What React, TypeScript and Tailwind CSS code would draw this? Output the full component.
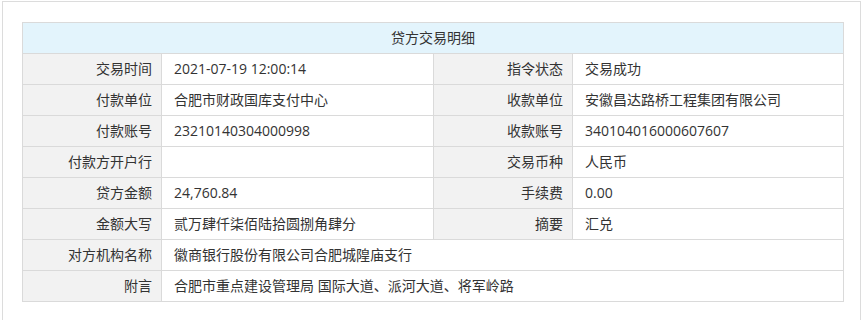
const rows: [string, string, string?, string?][] = [
  ['交易时间', '2021-07-19 12:00:14', '指令状态', '交易成功'],
  ['付款单位', '合肥市财政国库支付中心', '收款单位', '安徽昌达路桥工程集团有限公司'],
  ['付款账号', '23210140304000998', '收款账号', '340104016000607607'],
  ['付款方开户行', '', '交易币种', '人民币'],
  ['贷方金额', '24,760.84', '手续费', '0.00'],
  ['金额大写', '贰万肆仟柒佰陆拾圆捌角肆分', '摘要', '汇兑'],
  ['对方机构名称', '徽商银行股份有限公司合肥城隍庙支行'],
  ['附言', '合肥市重点建设管理局 国际大道、派河大道、将军岭路'],
];

const label = 'h-[31px] bg-[#f2f2f2] border border-[#dadada] text-right pr-[9px] font-normal';
const value = 'h-[31px] bg-white border border-[#dadada] text-left pl-[12px]';

export default function App() {
  return (
    <div className="w-[865px] h-[320px] bg-white overflow-hidden">
      <div
        className="ml-[2px] mt-[1px] w-[859px] h-[340px] border border-[#dcdcdc] pt-[20px] pl-[19px] text-sm text-[#333]"
        style={{ fontFamily: '"Open Sans", "Noto Sans CJK SC", sans-serif' }}
      >
        <table className="w-[821px] border-collapse table-fixed">
          <colgroup>
            <col className="w-[139px]" />
            <col className="w-[272px]" />
            <col className="w-[139px]" />
            <col className="w-[271px]" />
          </colgroup>
          <thead>
            <tr>
              <th colSpan={4} className="h-[31px] bg-[#e3f4fc] border border-[#dadada] font-normal text-center">
                贷方交易明细
              </th>
            </tr>
          </thead>
          <tbody>
            {rows.map((r, i) => (
              <tr key={i}>
                <td className={label}>{r[0]}</td>
                {r[2] !== undefined ? (
                  <>
                    <td className={value}>{r[1]}</td>
                    <td className={label}>{r[2]}</td>
                    <td className={value}>{r[3]}</td>
                  </>
                ) : (
                  <td colSpan={3} className={value}>{r[1]}</td>
                )}
              </tr>
            ))}
          </tbody>
        </table>
      </div>
    </div>
  );
}
